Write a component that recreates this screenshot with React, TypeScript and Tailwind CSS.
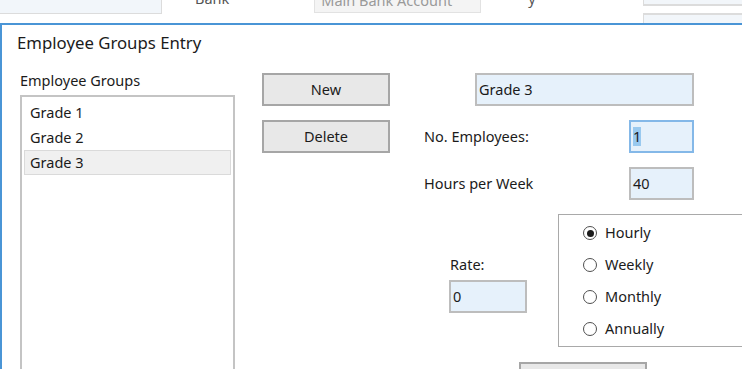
import clsx from 'clsx';

const font = { fontFamily: '"Noto Sans", "Open Sans", sans-serif' };

function TextBox({
    value,
    className,
    focused,
}: {
    value: string;
    className: string;
    focused?: boolean;
}) {
    return (
        <div
            className={clsx(
                'flex shrink-0 items-center border-2 bg-[#e6f1fb] px-[2px] text-[14.5px] text-[#1b1b1b]',
                focused ? 'border-[#84b8e8]' : 'border-[#bdbdbd]',
                className,
            )}
        >
            {focused ? (
                <span className="bg-[#99c9ef] leading-[19px]">{value}</span>
            ) : (
                value
            )}
        </div>
    );
}

function Button({ label, className }: { label: string; className?: string }) {
    return (
        <div
            className={clsx(
                'flex h-[33px] w-[128px] shrink-0 items-center justify-center border-2 border-[#a6a6a6] bg-[#e8e8e8] text-[14.5px] text-[#1b1b1b]',
                className,
            )}
        >
            {label}
        </div>
    );
}

function Radio({ label, checked }: { label: string; checked?: boolean }) {
    return (
        <div className="flex h-[32px] items-center">
            <span className="flex h-[14px] w-[14px] items-center justify-center rounded-full border-[1.5px] border-[#4f4f4f] bg-white">
                {checked && <span className="h-[7px] w-[7px] rounded-full bg-[#1b1b1b]" />}
            </span>
            <span className="ml-[8px] text-[14.5px] text-[#1b1b1b]">{label}</span>
        </div>
    );
}

export default function App() {
    const groups = ['Grade 1', 'Grade 2', 'Grade 3'];

    return (
        <div className="h-[369px] w-[742px] overflow-hidden bg-white" style={font}>
            {/* window behind the dialog */}
            <div className="flex h-[23px] items-start overflow-hidden">
                <div className="h-[14px] w-[162px] shrink-0 border-r border-b border-[#dcdcdc] bg-[#f2f6fa]" />
                <div className="-mt-[11px] ml-[33px] text-[14.5px] leading-[18px] text-[#555]">Bank</div>
                <div className="ml-[85px] flex h-[13px] w-[167px] shrink-0 items-start overflow-hidden border border-t-0 border-[#e2e2e2] bg-[#f4f4f4]">
                    <span className="-mt-[9px] ml-[6px] text-[14.5px] leading-[18px] text-[#9a9a9a]">
                        Main Bank Account
                    </span>
                </div>
                <div className="-mt-[11px] ml-[47px] text-[14.5px] leading-[18px] text-[#555]">y</div>
                <div className="ml-auto flex w-[99px] shrink-0 flex-col">
                    <div className="h-[6px] border-b-2 border-l border-[#dcdcdc] bg-[#f2f6fa]" />
                    <div className="mt-[7px] h-[10px] border-t-2 border-l border-[#dcdcdc] bg-[#f2f6fa]" />
                </div>
            </div>

            {/* dialog */}
            <div className="h-[346px] border-t-2 border-l-2 border-[#4a95d6] bg-white">
                <div className="pt-[8px] pl-[15px] text-[16.75px] leading-[20px] text-[#1b1b1b]">
                    Employee Groups Entry
                </div>

                <div className="mt-[17px] flex">
                    <div className="ml-[18px] w-[215px] shrink-0">
                        <div className="text-[14.5px] leading-[20px] text-[#1b1b1b]">Employee Groups</div>
                        <div className="mt-[5px] h-[280px] border-2 border-[#c4c4c4] bg-white px-[2px] pt-[3px]">
                            {groups.map((g, i) => (
                                <div
                                    key={g}
                                    className={clsx(
                                        'flex h-[25px] items-center border px-[5px] text-[14.5px] text-[#1b1b1b]',
                                        i === 2
                                            ? 'border-[#dadada] bg-[#f0f0f0]'
                                            : 'border-transparent',
                                    )}
                                >
                                    {g}
                                </div>
                            ))}
                        </div>
                    </div>

                    <div className="mt-[3px] ml-[27px] flex shrink-0 flex-col gap-[14px]">
                        <Button label="New" />
                        <Button label="Delete" />
                    </div>

                    <div className="mt-[3px] ml-[34px] flex flex-1 flex-col">
                        <TextBox value="Grade 3" className="ml-[51px] h-[33px] w-[219px]" />

                        <div className="mt-[14px] flex items-center">
                            <span className="w-[205px] shrink-0 text-[14.5px] text-[#1b1b1b]">No. Employees:</span>
                            <TextBox value="1" focused className="h-[33px] w-[65px]" />
                        </div>

                        <div className="mt-[14px] flex items-center">
                            <span className="w-[205px] shrink-0 text-[14.5px] text-[#1b1b1b]">Hours per Week</span>
                            <TextBox value="40" className="h-[33px] w-[65px]" />
                        </div>

                        <div className="mt-[14px] flex">
                            <div className="mt-[40px] ml-[25px] flex shrink-0 flex-col">
                                <span className="ml-[1px] text-[14.5px] leading-[20px] text-[#1b1b1b]">Rate:</span>
                                <TextBox value="0" className="mt-[6px] h-[33px] w-[78px]" />
                            </div>
                            <div className="ml-[31px] h-[133px] w-[200px] shrink-0 border border-[#a9a9a9] pt-[2px] pl-[24px]">
                                <Radio label="Hourly" checked />
                                <Radio label="Weekly" />
                                <Radio label="Monthly" />
                                <Radio label="Annually" />
                            </div>
                        </div>

                        <Button label="" className="mt-[15px] ml-[95px]" />
                    </div>
                </div>
            </div>
        </div>
    );
}
